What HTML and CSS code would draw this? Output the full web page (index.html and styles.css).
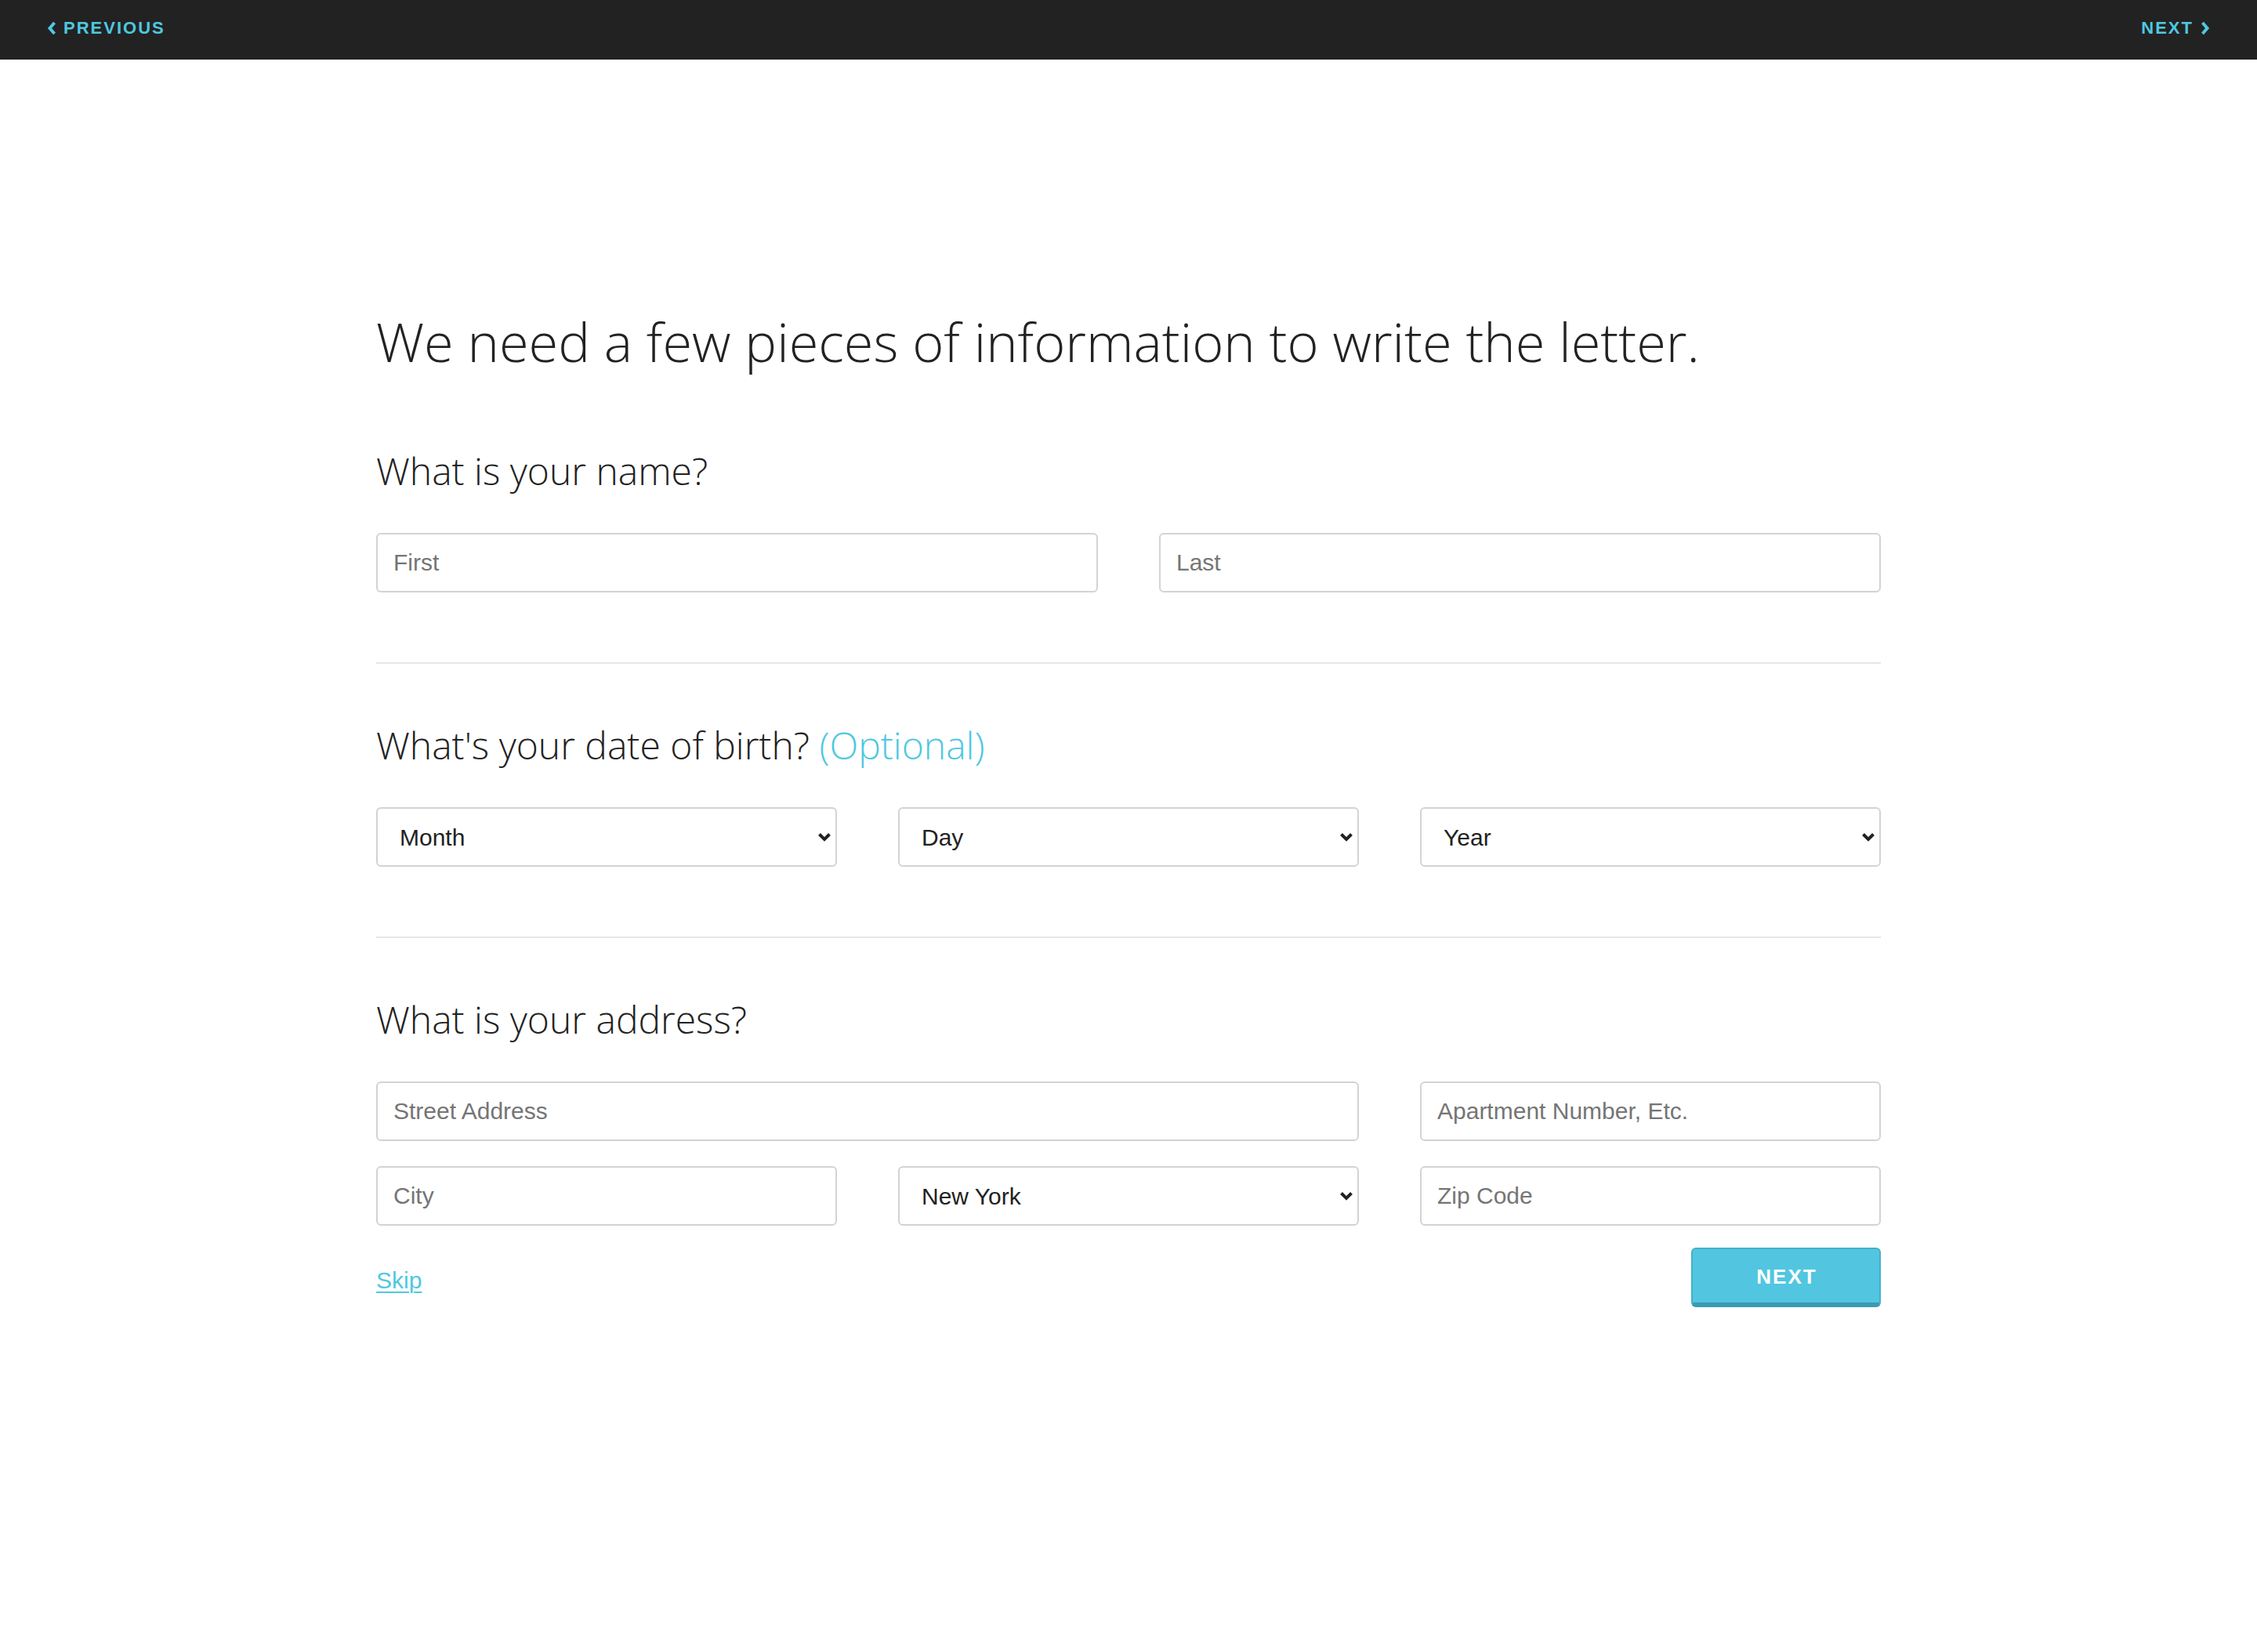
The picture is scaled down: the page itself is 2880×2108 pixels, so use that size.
FILE: index.html
```html
<!DOCTYPE html>
<html lang="en">
<head>
<meta charset="utf-8">
<title>Letter information</title>
<link rel="stylesheet" href="styles.css">
</head>
<body>
<header class="topbar">
  <a class="nav-link" href="#">
    <svg class="nav-chev" width="12" height="18" viewBox="0 0 12 18"><polyline points="9.5,2 3.5,9 9.5,16" fill="none" stroke="currentColor" stroke-width="4"/></svg>
    <span>PREVIOUS</span>
  </a>
  <a class="nav-link" href="#">
    <span>NEXT</span>
    <svg class="nav-chev" width="12" height="18" viewBox="0 0 12 18"><polyline points="2.5,2 8.5,9 2.5,16" fill="none" stroke="currentColor" stroke-width="4"/></svg>
  </a>
</header>

<main class="container">
  <h1 class="title">We need a few pieces of information to write the letter.</h1>

  <section class="section">
    <h2 class="question">What is your name?</h2>
    <div class="grid grid-2">
      <input class="field" type="text" placeholder="First">
      <input class="field" type="text" placeholder="Last">
    </div>
  </section>

  <section class="section">
    <h2 class="question">What's your date of birth? <span class="optional">(Optional)</span></h2>
    <div class="grid grid-3">
      <div class="select-wrap">
        <select class="field select"><option>Month</option></select>
        <svg class="select-chev" width="18" height="13" viewBox="0 0 18 13"><polyline points="2.5,2.5 9,9 15.5,2.5" fill="none" stroke="#222" stroke-width="4"/></svg>
      </div>
      <div class="select-wrap">
        <select class="field select"><option>Day</option></select>
        <svg class="select-chev" width="18" height="13" viewBox="0 0 18 13"><polyline points="2.5,2.5 9,9 15.5,2.5" fill="none" stroke="#222" stroke-width="4"/></svg>
      </div>
      <div class="select-wrap">
        <select class="field select"><option>Year</option></select>
        <svg class="select-chev" width="18" height="13" viewBox="0 0 18 13"><polyline points="2.5,2.5 9,9 15.5,2.5" fill="none" stroke="#222" stroke-width="4"/></svg>
      </div>
    </div>
  </section>

  <section class="section last">
    <h2 class="question">What is your address?</h2>
    <div class="grid grid-3 address">
      <input class="field span-2" type="text" placeholder="Street Address">
      <input class="field" type="text" placeholder="Apartment Number, Etc.">
      <input class="field" type="text" placeholder="City">
      <div class="select-wrap">
        <select class="field select"><option>New York</option></select>
        <svg class="select-chev" width="18" height="13" viewBox="0 0 18 13"><polyline points="2.5,2.5 9,9 15.5,2.5" fill="none" stroke="#222" stroke-width="4"/></svg>
      </div>
      <input class="field" type="text" placeholder="Zip Code">
    </div>
    <div class="actions">
      <a class="skip" href="#">Skip</a>
      <button class="btn-next" type="button">NEXT</button>
    </div>
  </section>
</main>
</body>
</html>
```

FILE: styles.css
```css
* {
  box-sizing: border-box;
}

html, body {
  margin: 0;
  padding: 0;
  background: #ffffff;
}

body {
  font-family: "Open Sans", "Liberation Sans", sans-serif;
  color: #222222;
}

.topbar {
  height: 76px;
  background: #222222;
  display: flex;
  align-items: center;
  justify-content: space-between;
  padding: 0 60px 4px 60px;
}

.nav-link {
  display: flex;
  align-items: center;
  gap: 9px;
  color: #4fc8e0;
  text-decoration: none;
  font-family: "Liberation Sans", Arial, sans-serif;
  font-weight: 700;
  font-size: 22px;
  letter-spacing: 2px;
  line-height: 1;
}

.nav-chev {
  display: block;
}

.container {
  width: 1920px;
  margin: 0 auto;
  padding-top: 320px;
}

.title {
  margin: 0;
  font-family: "Open Sans", sans-serif;
  font-weight: 300;
  font-size: 68.5px;
  line-height: 80px;
  color: #222222;
}

.section {
  padding-top: 96px;
  padding-bottom: 89px;
  border-bottom: 2px solid #e6e6e6;
}

.section + .section {
  padding-top: 75px;
}

.section.last {
  border-bottom: none;
}

.question {
  margin: 0 0 50px 0;
  font-family: "Open Sans", sans-serif;
  font-weight: 300;
  font-size: 48px;
  line-height: 58px;
  color: #222222;
}

.optional {
  color: #4fc8e0;
}

.grid {
  display: grid;
  column-gap: 78px;
  row-gap: 32px;
}

.grid-2 {
  grid-template-columns: 1fr 1fr;
}

.grid-3 {
  grid-template-columns: 1fr 1fr 1fr;
}

.span-2 {
  grid-column: span 2;
}

.field {
  display: block;
  width: 100%;
  height: 76px;
  margin: 0;
  border: 2px solid #d3d3d3;
  border-radius: 6px;
  background: #ffffff;
  padding: 0 20px;
  font-family: "Liberation Sans", Arial, sans-serif;
  font-size: 30px;
  color: #222222;
  outline: none;
}

.field::placeholder {
  color: #757575;
  opacity: 1;
}

.select-wrap {
  position: relative;
}

.select {
  appearance: none;
  -webkit-appearance: none;
  padding-left: 28px;
  padding-right: 40px;
}

.select-chev {
  position: absolute;
  right: 7px;
  top: 32px;
  pointer-events: none;
}

.actions {
  display: flex;
  justify-content: space-between;
  align-items: center;
  margin-top: 28px;
}

.skip {
  font-family: "Liberation Sans", Arial, sans-serif;
  font-size: 30px;
  color: #4fc8e0;
  text-decoration: underline;
  text-decoration-thickness: 2px;
  text-underline-offset: 4px;
  padding-top: 8px;
}

.btn-next {
  width: 242px;
  height: 76px;
  background: #52c6e0;
  border: 2px solid #44afc7;
  border-bottom: 6px solid #3b9bb1;
  border-radius: 6px;
  color: #ffffff;
  font-family: "Liberation Sans", Arial, sans-serif;
  font-weight: 700;
  font-size: 26px;
  letter-spacing: 2px;
  padding: 2px 0 0 2px;
  cursor: pointer;
}
```
